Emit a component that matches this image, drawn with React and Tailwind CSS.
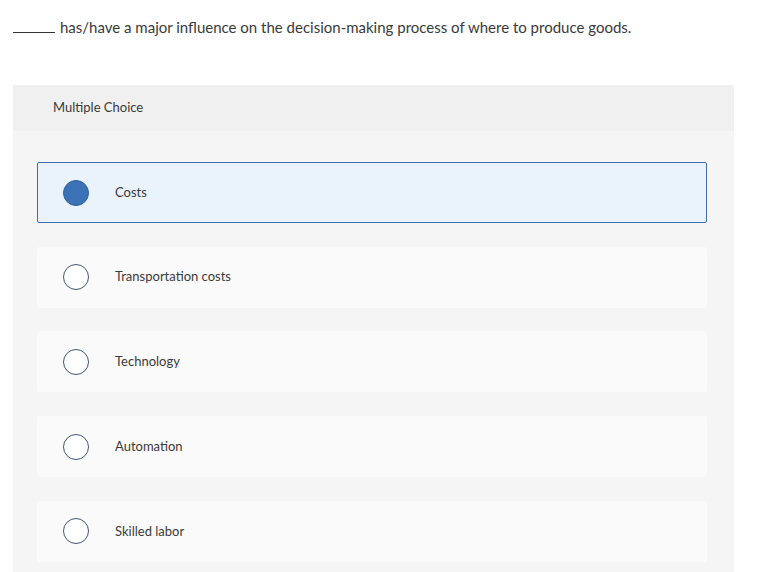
const options = ["Costs", "Transportation costs", "Technology", "Automation", "Skilled labor"];

export default function App() {
  const selected = 0;
  return (
    <div className="w-[772px] h-[572px] overflow-hidden bg-white font-['Lato','Open_Sans',sans-serif] text-[#3a3a3a]">
      <div className="flex items-end pl-[13px] pt-[12px] h-[38px]">
        <span className="inline-block w-[42px] border-b border-[#333] mb-[5px]"></span>
        <span className="ml-[5px] text-[15px] leading-[22px]">
          has/have a major influence on the decision-making process of where to produce goods.
        </span>
      </div>

      <div className="ml-[13px] mt-[47px] w-[721px] h-[600px] bg-[#f5f5f5]">
        <div className="h-[46px] bg-[#f0f0f0] flex items-center pl-[40px] text-[13px]">Multiple Choice</div>
        <div className="flex flex-col gap-[23.7px] pt-[31px] pl-[24px]">
          {options.map((opt, i) => {
            const isSel = i === selected;
            return (
              <div
                key={opt}
                className={`w-[670px] h-[61px] rounded-[2px] flex items-center ${
                  isSel ? "bg-[#eaf3fc] border border-[#3d6ea8]" : "bg-[#fafafa] border border-[#fafafa]"
                }`}
              >
                <div className="w-[77px] flex justify-center pr-[1px]">
                  {isSel ? (
                    <span className="w-[26px] h-[26px] rounded-full bg-[#3a72b5] border border-[#2f5f99]"></span>
                  ) : (
                    <span className="w-[26px] h-[26px] rounded-full bg-white border-[1.5px] border-[#3f5670]"></span>
                  )}
                </div>
                <span className="text-[13px]">{opt}</span>
              </div>
            );
          })}
        </div>
      </div>
    </div>
  );
}
